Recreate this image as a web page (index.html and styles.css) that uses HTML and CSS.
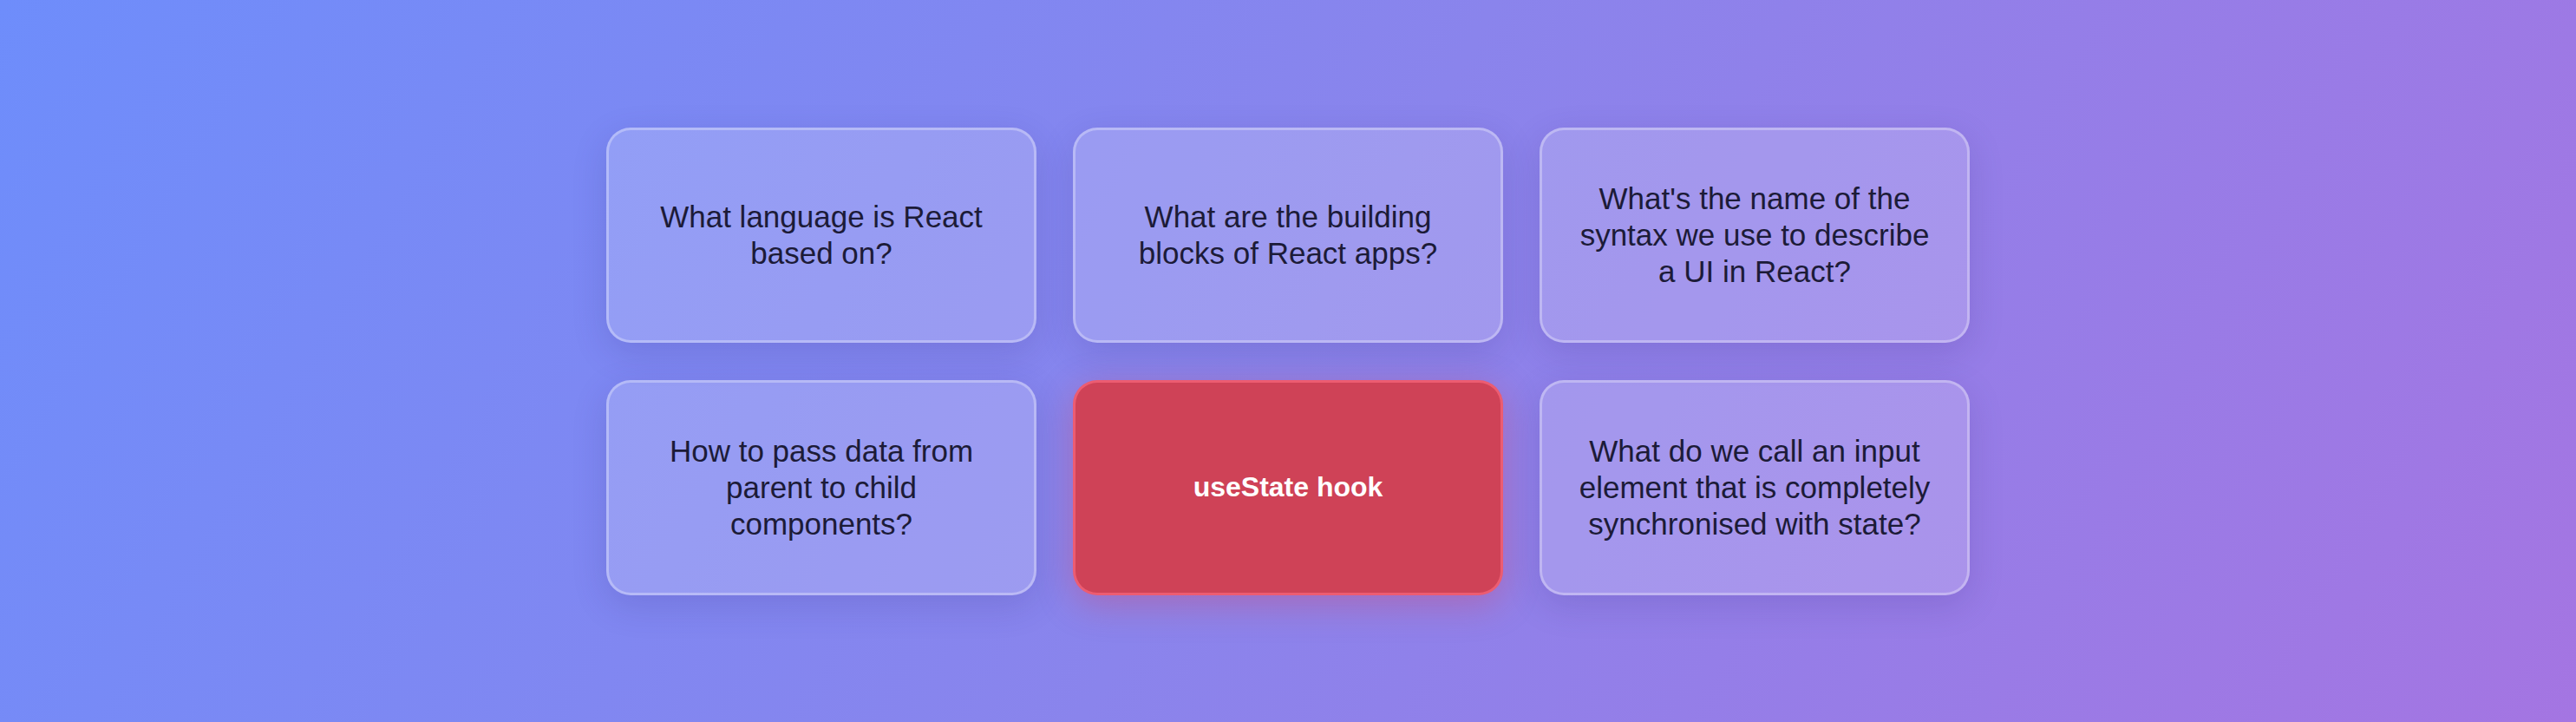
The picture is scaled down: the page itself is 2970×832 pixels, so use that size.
FILE: index.html
```html
<!DOCTYPE html>
<html lang="en">
<head>
    <meta charset="UTF-8">
    <meta name="viewport" content="width=device-width, initial-scale=1.0">
    <title>React Quiz</title>
    <link rel="stylesheet" href="styles.css">
</head>
<body>
    <div class="board">
        <div class="card">What language is React based on?</div>
        <div class="card">What are the building blocks of React apps?</div>
        <div class="card">What's the name of the syntax we use to describe a UI in React?</div>
        <div class="card">How to pass data from parent to child components?</div>
        <div class="card flipped">useState hook</div>
        <div class="card">What do we call an input element that is completely synchronised with state?</div>
    </div>
</body>
</html>
```

FILE: styles.css
```css
body {
    font-family: "Liberation Sans", Arial, sans-serif;
    background: linear-gradient(120deg, #6e8dfb 0%, #8a84ec 50%, #a475e2 100%);
    display: flex;
    justify-content: center;
    align-items: center;
    height: 100vh;
    margin: 0;
}
.board {
    display: grid;
    grid-template-columns: repeat(3, 496px);
    grid-template-rows: repeat(2, 248px);
    gap: 43px 42px;
}
.card {
    box-sizing: border-box;
    display: flex;
    justify-content: center;
    align-items: center;
    text-align: center;
    padding: 0 38px;
    font-size: 35px;
    line-height: 1.2;
    color: #1c1b38;
    background-color: rgba(255, 255, 255, 0.18);
    border: 3px solid rgba(255, 255, 255, 0.3);
    border-radius: 28px;
    box-shadow: 0 12px 40px rgba(40, 30, 110, 0.15);
}
.card.flipped {
    background-color: #cf4257;
    border-color: rgba(255, 110, 130, 0.6);
    color: #fff;
    font-size: 32px;
    font-weight: bold;
    box-shadow: 0 10px 40px rgba(220, 60, 90, 0.35);
}
```
